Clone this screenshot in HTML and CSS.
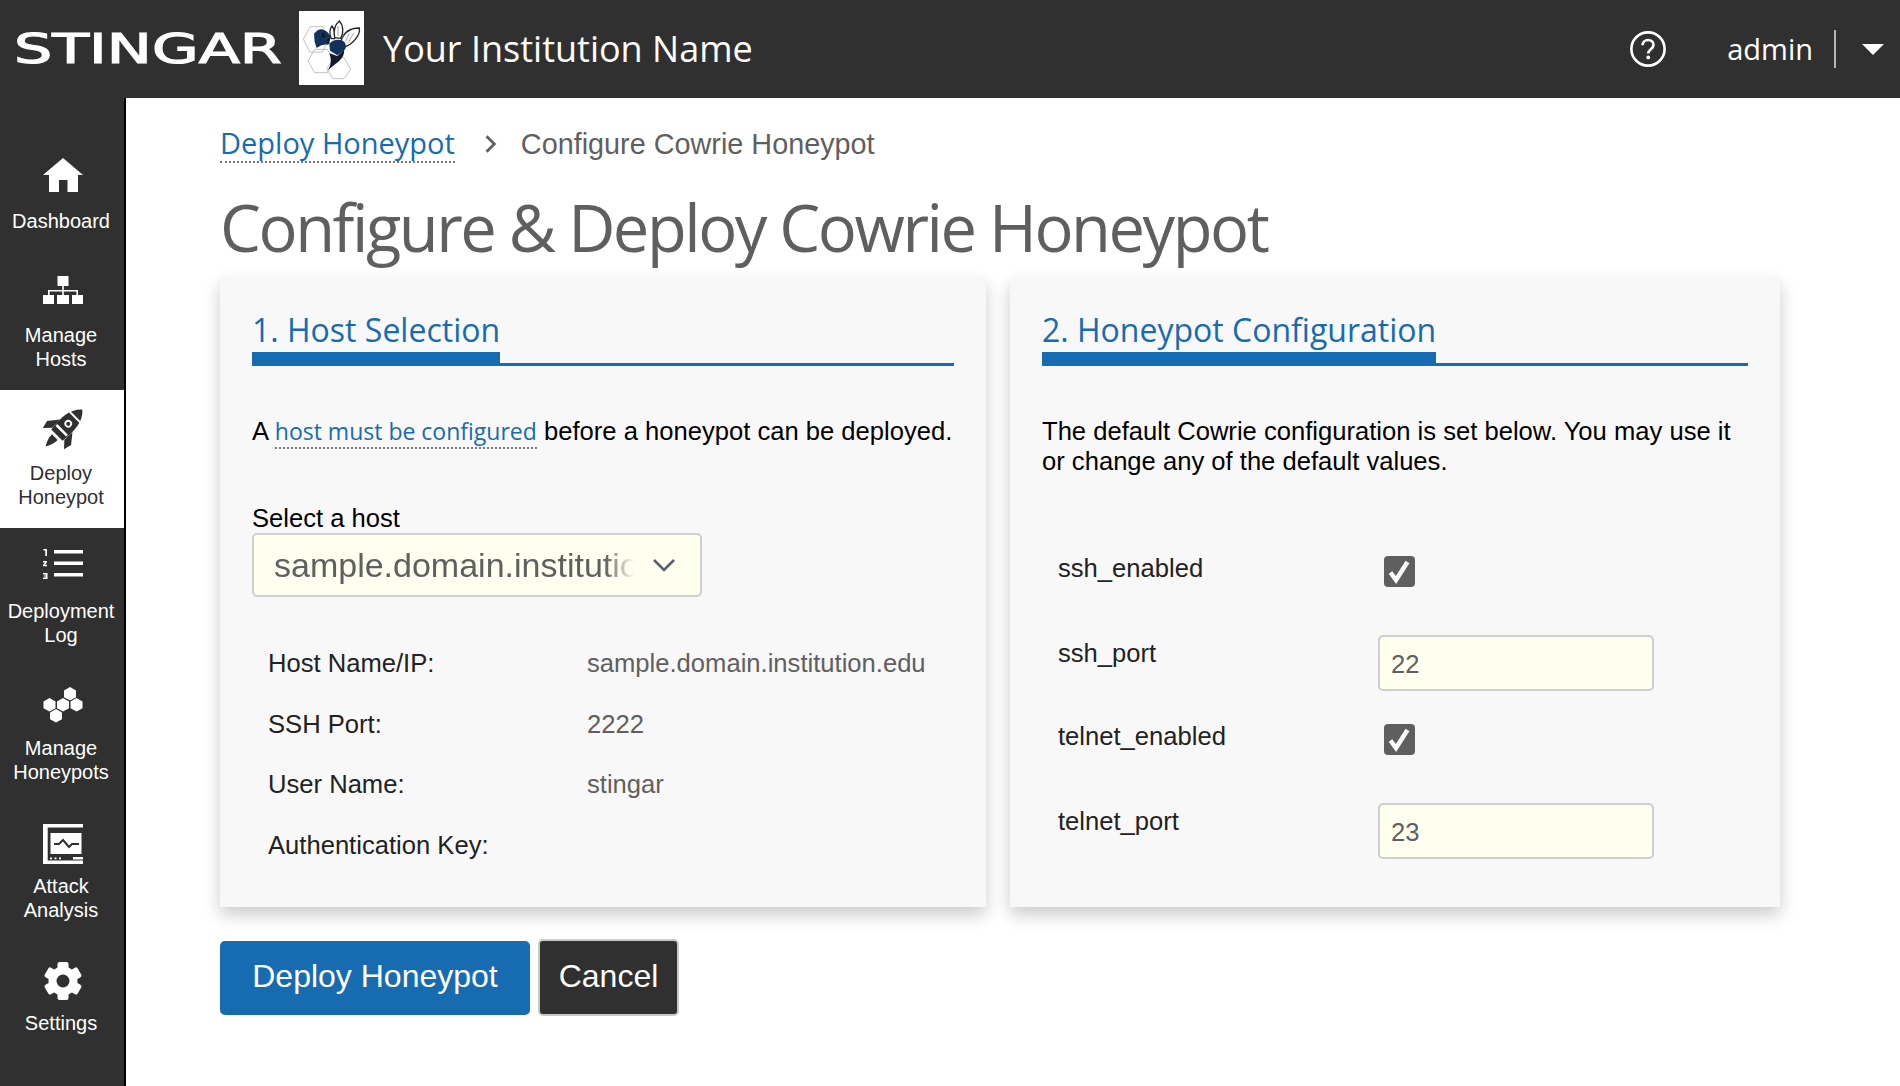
FILE: index.html
```html
<!DOCTYPE html>
<html lang="en">
<head>
<meta charset="utf-8">
<title>Configure Cowrie Honeypot</title>
<link rel="stylesheet" href="styles.css">
</head>
<body>
<header class="topbar">
  <div class="brand">
    <span class="wordmark"><span class="wordmark-text">STINGAR</span></span>
    <svg class="bee" viewBox="25 15 195 222" aria-hidden="true">
      <rect x="25" y="15" width="195" height="222" fill="#fff"/>
      <g fill="none" stroke="#b4b4b4" stroke-width="2.500">
        <path d="M38 100l20-38h37l20 38-20 38H58z"/>
        <path d="M52 165l20-35h38l20 35-20 35H72z"/>
        <path d="M108 190l20-35h32l20 35-20 28h-32z"/>
      </g>
      <g fill="#fff" stroke="#222" stroke-width="4">
        <path d="M122 98c-6-14-6-28 2-38 6 8 10 24 8 38z"/>
        <path d="M132 95c-4-20 0-38 14-50 12 12 14 34 4 52z"/>
        <path d="M150 108c6-22 22-42 56-42 4 18-16 46-42 56z"/>
      </g>
      <path d="M160 82l-6 18M176 84l-12 22M190 80l-18 30M142 60v30" stroke="#777" stroke-width="2" fill="none"/>
      <path fill="#14315c" d="M70 84c8-12 20-18 30-12 10 4 18 12 20 24l-8 18-20 4-14 8-6-18z"/>
      <path fill="#14315c" d="M116 114c8-12 26-16 40-10 10 6 12 18 6 28l-22 16-22-14z"/>
      <path fill="#14192b" d="M116 142l24 8 20-18c2 14-6 26-18 36l-30 24c8-12 12-28 4-50z"/>
      <path fill="#14192b" d="M96 76l10 16-14 4zM110 100l8-4-2 18-8 2z"/>
    </svg>
    <span class="institution">Your Institution Name</span>
  </div>
  <div class="account">
    <svg class="help" viewBox="0 0 36 36" aria-hidden="true">
      <circle cx="18" cy="18" r="16.600" fill="none" stroke="#fff" stroke-width="2.600"/>
      <path d="M12.600 14.200c0-3.200 2.400-5.200 5.500-5.200 3 0 5.400 1.900 5.400 4.800 0 4.400-5.300 4.400-5.300 8.600" fill="none" stroke="#fff" stroke-width="2.600"/>
      <circle cx="18.200" cy="26.400" r="1.900" fill="#fff"/>
    </svg>
    <span class="user">admin</span>
    <span class="divider"></span>
    <span class="caret"></span>
  </div>
</header>

<div class="shell">
  <nav class="sidebar">
    <a class="nav-item nav-home">
      <svg class="nav-icon" viewBox="0 0 40 40"><path d="M20 3L40 20H35V37H24.500V25H16V37H6V20H0z"/></svg>
      <span>Dashboard</span>
    </a>
    <a class="nav-item nav-hosts">
      <svg class="nav-icon" viewBox="0 0 40 40"><path d="M14.500 6h11v10h-11zM0 25h11v9H0zM14 25h12v9H14zM29 25h11v9H29z"/><path d="M19.200 16h1.600v4H35v5h-1.600v-3.400H20.800V25h-1.600v-3.400H6.600V25H5v-5h14.200z"/></svg>
      <span>Manage<br>Hosts</span>
    </a>
    <a class="nav-item nav-deploy active">
      <svg class="nav-icon" viewBox="0 0 40 40">
        <g transform="translate(21 19) rotate(45)">
          <path d="M0-26C9-18 10-6 8 10H-8C-10-6-9-18 0-26z"/>
          <path class="cut" d="M-7.500-16.500H7.500V-14.500H-7.500zM-7.500 2H7.500V4.500H-7.500z"/>
          <circle class="cut" cx="0" cy="-6" r="3.800"/>
          <circle cx="0" cy="-6" r="2"/>
          <path d="M-9-3L-17 7-15 15-8.500 8zM9-3L17 7 15 15 8.500 8z"/>
          <path d="M-4 13C-4 18-2 23 0 26 2 23 4 18 4 13z"/>
        </g>
      </svg>
      <span>Deploy<br>Honeypot</span>
    </a>
    <a class="nav-item nav-log">
      <svg class="nav-icon" viewBox="0 0 40 40"><path d="M11 5h29v3.500H11zM11 16.500h29v3.500H11zM11 28h29v3.500H11z"/><path d="M.500 4H4v7H2.300V5.500H.500zM0 16h4v1.500L2 19.800h2v1.400H0v-1.400l2.200-2.300H0zM0 28h4.500v6H0v-1.400h2.800v-1H.8v-1.200h2v-1H0z"/></svg>
      <span>Deployment<br>Log</span>
    </a>
    <a class="nav-item nav-pots">
      <svg class="nav-icon" viewBox="0 0 40 40"><path d="M27 3l6 3.400v6.800L27 16.600l-6-3.400V6.400zM6.500 14L12.500 17.400v6.800L6.500 27.600.500 24.200v-6.800zM20 14L26 17.400v6.800L20 27.600l-6-3.400v-6.800zM33.500 14L39.500 17.400v6.800L33.500 27.600l-6-3.400v-6.800zM13 25l6 3.400v6.800L13 38.600l-6-3.400v-6.800z"/></svg>
      <span>Manage<br>Honeypots</span>
    </a>
    <a class="nav-item nav-attack">
      <svg class="nav-icon" viewBox="0 0 40 40">
        <path d="M0 0h40v3.500H4.700V36.500H40V40H0zM7.500 9h31v21h-31z"/>
        <path class="chart" d="M11 20h5l4-4 6 7 3-3h7"/>
        <path class="cut" d="M7 33.400h2v1.800H7zM11.500 33.400h2v1.800h-2zM16 33.400h2v1.800h-2z"/>
        <path d="M30 33h10v2.500H30z"/>
      </svg>
      <span>Attack<br>Analysis</span>
    </a>
    <a class="nav-item nav-settings">
      <svg class="nav-icon" viewBox="0 0 40 40">
        <g transform="translate(20 20)">
          <circle r="14.500"/>
          <rect x="-5.500" y="-19" width="11" height="10" rx="2"/>
          <rect x="-5.500" y="-19" width="11" height="10" rx="2" transform="rotate(60)"/>
          <rect x="-5.500" y="-19" width="11" height="10" rx="2" transform="rotate(120)"/>
          <rect x="-5.500" y="-19" width="11" height="10" rx="2" transform="rotate(180)"/>
          <rect x="-5.500" y="-19" width="11" height="10" rx="2" transform="rotate(240)"/>
          <rect x="-5.500" y="-19" width="11" height="10" rx="2" transform="rotate(300)"/>
          <circle class="hole" r="6.500"/>
        </g>
      </svg>
      <span>Settings</span>
    </a>
  </nav>

  <main class="content">
    <div class="crumbs">
      <a class="link crumb-link">Deploy Honeypot</a>
      <svg class="crumb-sep" viewBox="0 0 12 18"><path d="M2 2l7 7-7 7" fill="none" stroke="#5f5f5f" stroke-width="2.500"/></svg>
      <span class="crumb-current">Configure Cowrie Honeypot</span>
    </div>
    <h1 class="page-title">Configure &amp; Deploy Cowrie Honeypot</h1>

    <div class="cards">
      <section class="card">
        <h2 class="card-title"><span>1. Host Selection</span></h2>
        <p class="intro">A <a class="link">host must be configured</a> before a honeypot can be deployed.</p>
        <label class="select-label">Select a host</label>
        <div class="select">
          <span class="select-value">sample.domain.institution.edu</span>
          <svg class="chev" viewBox="0 0 24 14"><path d="M2 2l10 10L22 2" fill="none" stroke="#55606a" stroke-width="2.600"/></svg>
        </div>
        <dl class="facts">
          <dt>Host Name/IP:</dt><dd>sample.domain.institution.edu</dd>
          <dt>SSH Port:</dt><dd>2222</dd>
          <dt>User Name:</dt><dd>stingar</dd>
          <dt>Authentication Key:</dt><dd></dd>
        </dl>
      </section>

      <section class="card">
        <h2 class="card-title"><span>2. Honeypot Configuration</span></h2>
        <p class="intro">The default Cowrie configuration is set below. You may use it or change any of the default values.</p>
        <div class="config">
          <div class="cfg-row"><span class="cfg-label">ssh_enabled</span><span class="check"><svg viewBox="0 0 31 31"><path d="M6.500 16.500l5.500 7.500L23.500 6" fill="none" stroke="#fff" stroke-width="4.500"/></svg></span></div>
          <div class="cfg-row"><span class="cfg-label">ssh_port</span><span class="field">22</span></div>
          <div class="cfg-row"><span class="cfg-label">telnet_enabled</span><span class="check"><svg viewBox="0 0 31 31"><path d="M6.500 16.500l5.500 7.500L23.500 6" fill="none" stroke="#fff" stroke-width="4.500"/></svg></span></div>
          <div class="cfg-row"><span class="cfg-label">telnet_port</span><span class="field">23</span></div>
        </div>
      </section>
    </div>

    <div class="actions">
      <button class="btn btn-primary">Deploy Honeypot</button>
      <button class="btn btn-dark">Cancel</button>
    </div>
  </main>
</div>
</body>
</html>
```
FILE: styles.css
```css
* { box-sizing: border-box; }
html, body { margin: 0; height: 100%; }
body { width: 1900px; height: 1086px; overflow: hidden; background: #fff; font-family: "Liberation Sans", Arial, sans-serif; color: #000; display: flex; flex-direction: column; }

.topbar { height: 98px; flex: none; background: #303030; display: flex; align-items: center; justify-content: space-between; color: #fff; }
.brand { display: flex; align-items: center; }
.wordmark { width: 283px; height: 73px; display: flex; align-items: center; }
.wordmark-text { display: inline-block; margin-left: 14px; font: 400 41px/1 "DejaVu Sans", sans-serif; -webkit-text-stroke: 1.200px #fff; transform: scaleX(1.470); transform-origin: left center; }
.bee { width: 67px; height: 74px; margin: 0 0 3px 15px; flex: none; }
.institution { margin-left: 18px; font: 400 36px/1 "Open Sans", sans-serif; }
.account { display: flex; align-items: center; margin-right: 16px; }
.help { width: 36px; height: 36px; }
.user { margin: 0 0 2px 61px; font: 400 29px/1 "Open Sans", sans-serif; }
.divider { width: 2px; height: 38px; background: #b5b5b5; margin-left: 21px; }
.caret { width: 0; height: 0; margin-left: 26px; border-left: 11px solid transparent; border-right: 11px solid transparent; border-top: 11px solid #fff; }

.shell { flex: 1; display: flex; min-height: 0; }
.sidebar { width: 126px; flex: none; background: #303030; border-right: 2px solid #000; padding-top: 16px; }
.nav-item { width: 124px; height: 138px; display: flex; flex-direction: column; align-items: center; color: #fff; font-size: 20px; line-height: 24px; text-align: center; padding-right: 2px; }
.nav-item.active { background: #fff; color: #303030; }
.nav-icon { width: 40px; height: 40px; margin-left: 3px; fill: currentColor; flex: none; overflow: visible; }
.nav-item .cut { fill: #fff; }
.nav-item .chart { fill: none; stroke: #303030; stroke-width: 2; }
.nav-item .hole { fill: #303030; }

.nav-item span { display: block; }
.nav-home .nav-icon { margin-top: 41px; margin-bottom: 14px; }
.nav-hosts .nav-icon { margin-top: 18px; margin-bottom: 13px; }
.nav-deploy .nav-icon { margin-top: 19px; margin-bottom: 12px; }
.nav-log .nav-icon { margin-top: 17px; margin-bottom: 14px; }
.nav-pots .nav-icon { margin-top: 18px; margin-bottom: 12px; }
.nav-attack .nav-icon { margin-top: 20px; margin-bottom: 10px; }
.nav-settings .nav-icon { margin-top: 19px; margin-bottom: 10px; }

.content { flex: 1; padding: 26px 0 0 94px; min-width: 0; }
.crumbs { display: flex; align-items: center; height: 40px; }
.link { color: #176bb0; font-family: "Open Sans", sans-serif; border-bottom: 2px dotted #777; }
.crumb-link { font-size: 29px; line-height: 36px; }
.crumb-sep { width: 16px; height: 20px; margin-left: 28px; }
.crumb-current { margin-left: 22px; font: 400 28.800px/36px "Liberation Sans", sans-serif; color: #5f5f5f; }
.page-title { margin: 27px 0 0; font: 400 65px/72px "Open Sans", sans-serif; color: #5f5f5f; letter-spacing: -2.450px; }

.cards { display: flex; gap: 24px; margin-top: 14px; }
.card { width: 766px; height: 630px; background: #f8f8f8; box-shadow: 0 8px 16px rgba(0,0,0,.2); padding: 32px; }
.card + .card { width: 770px; }
.card-title { margin: 0; height: 57px; display: flex; font: 400 32px/42px "Open Sans", sans-serif; color: #176bb0; border-bottom: 3px solid #176bb0; }
.card-title span { height: 57px; border-bottom: 14px solid #176bb0; }
.intro { margin: 50px 0 0; font-size: 25.600px; line-height: 30px; }
.intro .link { font-size: 23px; }
.select-label { display: block; margin-top: 57px; font-size: 25.600px; line-height: 30px; }
.select { width: 450px; height: 64px; border: 2px solid #cfcfcf; border-radius: 5px; background: #fffff0; display: flex; align-items: center; padding-left: 20px; }
.select-value { width: 360px; overflow: hidden; white-space: nowrap; font-size: 34px; color: #5f5f5f; -webkit-mask-image: linear-gradient(to right, #000 92%, transparent); mask-image: linear-gradient(to right, #000 92%, transparent); }
.chev { width: 24px; height: 14px; margin-left: 18px; }
.facts { margin: 51px 0 0 16px; display: grid; grid-template-columns: 319px 1fr; row-gap: 29.500px; font-size: 25.600px; line-height: 31px; }
.facts dt { color: #222; }
.facts dd { margin: 0; color: #5f5f5f; }

.config { margin: 77px 0 0 16px; }
.cfg-row { display: flex; }
.cfg-label { width: 320px; font-size: 25.600px; line-height: 30px; color: #222; }
.check { width: 31px; height: 31px; background: #5f5f5f; border-radius: 4px; margin: 3px 0 51px 6px; }
.check svg { display: block; width: 31px; height: 31px; }
.field { width: 276px; height: 56px; border: 2px solid #cfcfcf; border-radius: 5px; background: #fffff0; font-size: 25.600px; line-height: 54px; padding-left: 11px; color: #5f5f5f; margin: -3px 0 30px; }

.actions { display: flex; gap: 8px; margin-top: 32px; align-items: center; }
.btn { font: 400 32px/1 "Liberation Sans", sans-serif; color: #fff; border-radius: 5px; padding: 0 0 4px; }
.btn-primary { width: 310px; height: 74px; background: #176bb0; border: 0; }
.btn-dark { width: 141px; height: 77px; background: #303030; border: 2px solid #c8c8c8; }
```
